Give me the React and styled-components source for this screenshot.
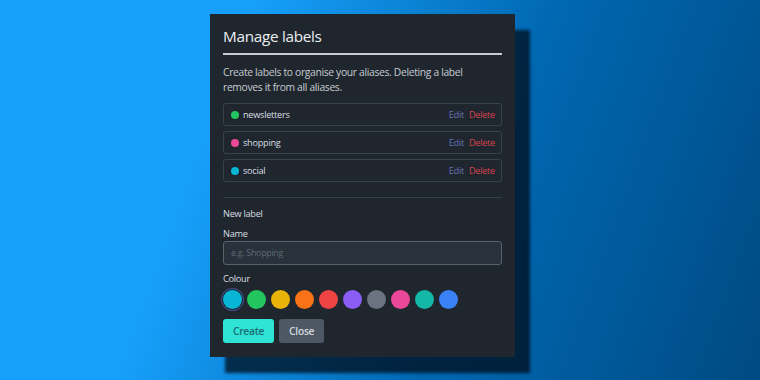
import React from "react";
import styled, { createGlobalStyle } from "styled-components";

const Global = createGlobalStyle`
  html, body { margin: 0; padding: 0; }
  body {
    font-family: "Open Sans", "Noto Sans", sans-serif;
    background: linear-gradient(110deg, #17a0fb 0%, #17a0fb 28%, #0068b2 62%, #004a82 100%);
    min-height: 380px;
    overflow: hidden;
  }
`;

const Stage = styled.div`
  width: 760px;
  height: 380px;
  box-sizing: border-box;
  padding: 14px 0 0 210px;
`;

const Panel = styled.div`
  width: 305px;
  box-sizing: border-box;
  background: #1f262e;
  padding: 10px 13px 14px 13px;
  box-shadow: 15px 16px 3px rgba(0, 8, 20, 0.72);
  color: #d9dde2;
`;

const Title = styled.h2`
  margin: 0;
  font-size: 15.3px;
  letter-spacing: -0.3px;
  font-weight: 400;
  line-height: 24px;
  color: #eceef0;
  padding-bottom: 5px;
  border-bottom: 2px solid #c9cdd2;
`;

const Description = styled.p`
  margin: 10px 0 0;
  font-size: 10.3px;
  letter-spacing: -0.32px;
  line-height: 15px;
  color: #c6cbd1;
`;

const List = styled.div`
  margin-top: 8px;
  display: flex;
  flex-direction: column;
  gap: 5px;
`;

const Row = styled.div`
  height: 23px;
  box-sizing: border-box;
  border: 1px solid #39414b;
  border-radius: 3px;
  display: flex;
  align-items: center;
  padding: 0 6px 0 7px;
  font-size: 9.2px;
  letter-spacing: -0.28px;
`;

const Dot = styled.span`
  width: 8px;
  height: 8px;
  border-radius: 50%;
  background: ${(p) => p.$color};
  margin-right: 4px;
  flex: none;
`;

const RowName = styled.span`
  flex: 1;
  color: #d9dde2;
`;

const LinkAction = styled.span`
  color: ${(p) => (p.$danger ? "#d9434e" : "#6474b4")};
  margin-left: 5px;
`;

const Divider = styled.hr`
  margin: 15px 0 0;
  border: none;
  border-top: 1px solid #363e48;
`;

const SectionLabel = styled.div`
  margin-top: ${(p) => p.$mt}px;
  font-size: 9.2px;
  letter-spacing: -0.28px;
  line-height: 15px;
  color: #d9dde2;
`;

const Input = styled.input`
  display: block;
  width: 100%;
  box-sizing: border-box;
  height: 24px;
  margin: 0;
  border: 1px solid #59626d;
  border-radius: 3px;
  background: #29313a;
  padding: 0 7px;
  font-family: inherit;
  font-size: 8.8px;
  letter-spacing: -0.25px;
  color: #d9dde2;
  outline: none;
  &::placeholder { color: #5f6a75; }
`;

const Swatches = styled.div`
  margin-top: 4px;
  display: flex;
  gap: 5px;
`;

const Swatch = styled.button`
  width: 19px;
  height: 19px;
  border-radius: 50%;
  border: none;
  padding: 0;
  background: ${(p) => p.$color};
  box-shadow: ${(p) => (p.$selected ? "0 0 0 1px #1f262e, 0 0 0 2px #3e4d8a" : "none")};
`;

const Buttons = styled.div`
  margin-top: 10px;
  display: flex;
  gap: 5px;
`;

const Button = styled.button`
  height: 24px;
  border: none;
  border-radius: 3px;
  padding: 0 10px;
  font-family: inherit;
  font-size: 10.3px;
  letter-spacing: -0.3px;
  font-weight: 600;
  background: ${(p) => (p.$primary ? "#2fe3d5" : "#4e5864")};
  color: ${(p) => (p.$primary ? "#1b6a72" : "#d4d8dd")};
`;

const labels = [
  { name: "newsletters", color: "#22c55e" },
  { name: "shopping", color: "#ec4899" },
  { name: "social", color: "#06b6d4" },
];

const colours = ["#06b6d4", "#22c55e", "#eab308", "#f97316", "#ef4444", "#8b5cf6", "#6b7280", "#ec4899", "#14b8a6", "#3b82f6"];

export default function App() {
  return (
    <>
      <Global />
      <Stage>
        <Panel>
          <Title>Manage labels</Title>
          <Description>Create labels to organise your aliases. Deleting a label removes it from all aliases.</Description>
          <List>
            {labels.map((l) => (
              <Row key={l.name}>
                <Dot $color={l.color} />
                <RowName>{l.name}</RowName>
                <LinkAction>Edit</LinkAction>
                <LinkAction $danger>Delete</LinkAction>
              </Row>
            ))}
          </List>
          <Divider />
          <SectionLabel $mt={8}>New label</SectionLabel>
          <SectionLabel $mt={5}>Name</SectionLabel>
          <Input placeholder="e.g. Shopping" />
          <SectionLabel $mt={6}>Colour</SectionLabel>
          <Swatches>
            {colours.map((c, i) => (
              <Swatch key={c} $color={c} $selected={i === 0} />
            ))}
          </Swatches>
          <Buttons>
            <Button $primary>Create</Button>
            <Button>Close</Button>
          </Buttons>
        </Panel>
      </Stage>
    </>
  );
}
